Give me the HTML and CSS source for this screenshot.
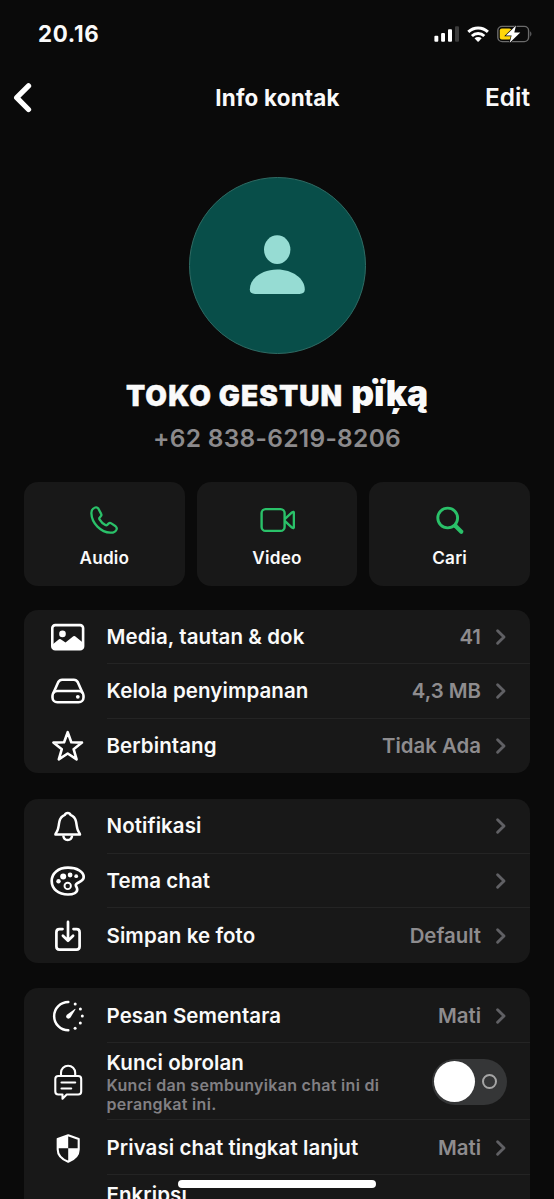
FILE: index.html
```html
<!DOCTYPE html>
<html lang="id">
<head>
<meta charset="utf-8">
<title>Info kontak</title>
<link rel="stylesheet" href="styles.css">
</head>
<body>
<svg class="defs" aria-hidden="true">
  <symbol id="chevron" viewBox="0 0 12 18"><path d="M2.6 2.7 9 9l-6.400 6.300" fill="none" stroke="currentColor" stroke-width="2.9" stroke-linecap="round" stroke-linejoin="round"/></symbol>
</svg>
<div class="screen">
  <header class="status">
    <span class="time">20.16</span>
    <svg class="status-icons" viewBox="0 0 100 20" aria-hidden="true">
      <g fill="#fff"><rect x=".4" y="11.800" width="3.900" height="6" rx="1"/><rect x="7.100" y="9" width="3.900" height="8.800" rx="1"/><rect x="14" y="5.200" width="4" height="12.600" rx="1"/></g>
      <rect x="21" y="2.300" width="4" height="15.500" rx="1" fill="#3b3b3b"/>
      <g fill="none" stroke="#fff" stroke-width="3"><path d="M34.300 7.800a14.200 14.200 0 0 1 19.600 0"/><path d="M37.900 12a9 9 0 0 1 12.400 0"/></g>
      <path d="M40.500 14.300a5.300 5.300 0 0 1 7.200 0l-3 3.200q-.6.5-1.200 0z" fill="#fff"/>
      <rect x="63.800" y="2.400" width="30.800" height="15.200" rx="4.300" fill="none" stroke="#6b6b6b" stroke-width="1.400"/>
      <path d="M96.300 7.300q2.200 2.600 0 5.400z" fill="#77777a"/>
      <rect x="65.800" y="4.400" width="11.500" height="11.200" rx="2" fill="#ffd60a"/>
      <path d="M82 1.600 71.800 11.600h5.800L75.700 18.700 86.300 8.600h-6z" fill="#fff" stroke="#0a0a0a" stroke-width="1.300" paint-order="stroke"/>
    </svg>
  </header>

  <nav class="nav">
    <svg class="back" viewBox="0 0 20 32" aria-hidden="true"><path d="M16.500 3.900 4.700 15.700 16.500 27.500" fill="none" stroke="#fff" stroke-width="5.300" stroke-linecap="round" stroke-linejoin="round"/></svg>
    <h1 class="nav-title">Info kontak</h1>
    <span class="edit">Edit</span>
  </nav>

  <section class="profile">
    <div class="avatar">
      <svg viewBox="0 0 56 60" aria-hidden="true"><g fill="#96dcd3"><ellipse cx="28.200" cy="14.600" rx="13.200" ry="14.300"/><path d="M.8 54.500C.8 43.500 13 34.500 28.200 34.500S55.800 43.500 55.800 54.500Q55.800 58.900 50.500 58.900H6Q.8 58.900.8 54.500z"/></g></svg>
    </div>
    <h2 class="name"><span class="name-main">TOKO GESTUN</span><span class="name-alt">pïķą</span></h2>
    <p class="phone">+62 838-6219-8206</p>
  </section>

  <section class="actions">
    <div class="action">
      <svg viewBox="0 0 36 30" aria-hidden="true"><path transform="translate(4 1)" d="M5.200 1.500C3 2.200 1.300 4.300 1.400 7.400c.3 9.900 9.500 18.900 19 19.300 3 .1 5.400-1.300 6.200-3.400.4-1.200 0-2.200-1-3l-4.300-2.900c-1-.7-2-.6-2.800.2l-1.300 1.300c-.5.500-1.100.6-1.800.2-2.600-1.500-4.400-3.300-5.900-5.800-.4-.7-.3-1.300.2-1.800l1.100-1.200c.8-.8.8-1.700.2-2.700L8.300 2.500C7.500 1.400 6.400 1.100 5.200 1.500z" fill="none" stroke="#2ac169" stroke-width="2.300" stroke-linejoin="round"/></svg>
      <span>Audio</span>
    </div>
    <div class="action">
      <svg viewBox="0 0 36 30" aria-hidden="true"><g transform="translate(.7 0)" fill="none" stroke="#2ac169" stroke-width="2.400" stroke-linejoin="round"><rect x="1.900" y="4.100" width="23" height="21.800" rx="4"/><path d="M25 14.200 32.300 7.400q1.900-1.300 1.900.8V21.800q0 2.100-1.900.8L25 15.800"/></g></svg>
      <span>Video</span>
    </div>
    <div class="action">
      <svg viewBox="0 0 36 30" aria-hidden="true"><g fill="none" stroke="#2ac169"><circle cx="15.700" cy="13" r="9.900" stroke-width="2.900"/><path d="m23.300 20.700 6 6" stroke-width="4.200" stroke-linecap="round"/></g></svg>
      <span>Cari</span>
    </div>
  </section>

  <section class="card">
    <div class="row">
      <svg class="icon" viewBox="0 0 40 40" aria-hidden="true"><rect x="4.300" y="8.100" width="30.800" height="24.200" rx="3" fill="none" stroke="#fff" stroke-width="2.600"/><circle cx="14.500" cy="16.900" r="3.300" fill="#fff"/><path d="M4.500 27.500 11 22.300q.8-.6 1.700 0l4.800 3.300 7.800-6.300q.9-.7 1.800 0l8 6.400V32H4.500z" fill="#fff"/></svg>
      <div class="body"><span class="label">Media, tautan &amp; dok</span><span class="value">41</span><svg class="chev"><use href="#chevron"/></svg></div>
    </div>
    <div class="row">
      <svg class="icon" viewBox="0 0 40 40" aria-hidden="true"><g fill="none" stroke="#fff" stroke-width="2.600" stroke-linejoin="round"><path d="M5.300 22.300 10.300 11Q11.600 8.700 14.100 8.700H25.900Q28.400 8.700 29.700 11L34.700 22.300"/><rect x="4.500" y="20" width="31" height="11.200" rx="4.800"/></g><circle cx="29.800" cy="25.800" r="1.900" fill="#fff"/></svg>
      <div class="body"><span class="label">Kelola penyimpanan</span><span class="value">4,3 MB</span><svg class="chev"><use href="#chevron"/></svg></div>
    </div>
    <div class="row">
      <svg class="icon" viewBox="0 0 40 40" aria-hidden="true"><path d="M19.700 6.200 23.300 16.300 34 16.600 25.600 23.200 28.600 33.400 19.700 27.500 10.800 33.400 13.800 23.200 5.400 16.600 16.100 16.300z" fill="none" stroke="#fff" stroke-width="2.600" stroke-linejoin="round"/></svg>
      <div class="body"><span class="label">Berbintang</span><span class="value">Tidak Ada</span><svg class="chev"><use href="#chevron"/></svg></div>
    </div>
  </section>

  <section class="card">
    <div class="row">
      <svg class="icon" viewBox="0 0 40 40" aria-hidden="true"><g fill="none" stroke="#fff" stroke-width="2.500" stroke-linejoin="round"><path d="M7.400 28.600Q7.400 27.500 8.300 26.500C10.700 24 10.300 20.500 11.400 15.500 12.200 11.700 14 9.900 16.900 8.800Q17.500 6.900 19.700 6.900T22.500 8.800C25.400 9.900 27.200 11.700 28 15.500 29.100 20.500 28.700 24 31.100 26.500Q32 27.500 32 28.600z"/><path d="M15.300 29.500c.3 3 2.100 4.500 4.400 4.500s4.100-1.500 4.400-4.500"/></g></svg>
      <div class="body"><span class="label">Notifikasi</span><svg class="chev"><use href="#chevron"/></svg></div>
    </div>
    <div class="row">
      <svg class="icon" viewBox="0 0 40 40" aria-hidden="true"><path d="M20 6.700C10.200 6.700 3.700 12.400 3.700 20 3.700 28 10.500 33.500 20 33.500c5.600 0 9.200-2 9.200-5 0-2-1.400-2.900-1.400-4.400 0-3.500 7.900-2.500 7.900-8.100C35.700 10.700 29 6.700 20 6.700z" fill="none" stroke="#fff" stroke-width="2.700"/><g fill="#fff"><circle cx="10.500" cy="20.200" r="2.200"/><circle cx="15.200" cy="15.600" r="3"/><circle cx="22.100" cy="14" r="2.400"/><circle cx="28.200" cy="15.200" r="1.900"/></g><circle cx="19.700" cy="24.900" r="3.200" fill="none" stroke="#fff" stroke-width="1.900"/></svg>
      <div class="body"><span class="label">Tema chat</span><svg class="chev"><use href="#chevron"/></svg></div>
    </div>
    <div class="row">
      <svg class="icon" viewBox="0 0 40 40" aria-hidden="true"><g fill="none" stroke="#fff" stroke-width="2.700" stroke-linecap="round" stroke-linejoin="round"><path d="M14.500 14.100H11.500Q8.400 14.100 8.400 17.200V31.600Q8.400 34.700 11.500 34.700H28.500Q31.600 34.700 31.600 31.600V17.200Q31.600 14.100 28.500 14.100H25.500"/><path d="M20 6.900V25.400M14.900 20.700 20 25.700 25.100 20.700"/></g></svg>
      <div class="body"><span class="label">Simpan ke foto</span><span class="value">Default</span><svg class="chev"><use href="#chevron"/></svg></div>
    </div>
  </section>

  <section class="card">
    <div class="row">
      <svg class="icon" viewBox="0 0 40 40" aria-hidden="true"><path d="M20.300 6A14.150 14.150 0 0 0 20.300 34.300" fill="none" stroke="#fff" stroke-width="2.500" stroke-linecap="round"/><g fill="#fff"><circle cx="27.200" cy="8" r="1.500"/><circle cx="32.400" cy="13" r="1.500"/><circle cx="34.300" cy="20.100" r="1.500"/><circle cx="32.300" cy="27.100" r="1.500"/><circle cx="27.100" cy="32.200" r="1.500"/><path d="M26.800 13q.9-.5.600.6L22.500 21.500q-1.500 1.900-3.400.7-1.900-1.600-.2-3.500z"/></g></svg>
      <div class="body"><span class="label">Pesan Sementara</span><span class="value">Mati</span><svg class="chev"><use href="#chevron"/></svg></div>
    </div>
    <div class="row row-lock">
      <svg class="icon" viewBox="0 0 40 40" aria-hidden="true"><g fill="none" stroke="#fff" stroke-width="2.100" stroke-linejoin="round" stroke-linecap="round"><path d="M13 14V10.800a7.100 7.100 0 0 1 14.200 0V14"/><path d="M10.300 14H30.200Q33.200 14 33.200 17V29.500Q33.200 32.500 30.200 32.500H18.700L14.500 36.700V32.500H10.300Q7.300 32.500 7.300 29.500V17Q7.300 14 10.300 14z"/><path d="M13.500 20.500H27.200M13.500 26.500H23.200"/></g></svg>
      <div class="body"><div class="stack"><span class="label">Kunci obrolan</span><span class="note">Kunci dan sembunyikan chat ini di perangkat ini.</span></div><span class="toggle"><i class="knob"></i><i class="ring"></i></span></div>
    </div>
    <div class="row">
      <svg class="icon" viewBox="0 0 40 40" aria-hidden="true"><path d="M20.200 7.200 30.700 11V21.500C30.700 27.500 26 31.500 20.200 33.800 14.400 31.500 9.700 27.500 9.700 21.500V11z" fill="none" stroke="#fff" stroke-width="2.100" stroke-linejoin="round"/><path d="M20.200 7.200V20.200H9.700V11zM20.200 20.200H30.700V21.500C30.700 27.500 26 31.500 20.200 33.800z" fill="#fff"/></svg>
      <div class="body"><span class="label">Privasi chat tingkat lanjut</span><span class="value">Mati</span><svg class="chev"><use href="#chevron"/></svg></div>
    </div>
    <div class="row row-enc">
      <div class="icon"></div>
      <div class="body"><span class="label">Enkripsi</span></div>
    </div>
  </section>
  <div class="home-bar"></div>
</div>
</body>
</html>
```

FILE: styles.css
```css
* { box-sizing: border-box; margin: 0; padding: 0; }
body {
  background: #0a0a0a;
  color: #fafafa;
  font-family: Inter, "Liberation Sans", sans-serif;
}
.defs { display: none; }
.screen {
  position: relative;
  width: 554px;
  height: 1199px;
  overflow: hidden;
}
.status {
  display: flex;
  justify-content: space-between;
  align-items: center;
  height: 68px;
  padding: 0 20px 0 38px;
}
.time { font-size: 22.300px; font-weight: 700; letter-spacing: .7px; line-height: 26px; margin-bottom: 1px; }
.status-icons { width: 100px; height: 20px; }
.nav {
  display: grid;
  grid-template-columns: 100px 1fr 100px;
  align-items: center;
  height: 59px;
  padding: 0 24px 0 12px;
}
.back { width: 20px; height: 32px; }
.nav-title { font-size: 22.400px; font-weight: 750; letter-spacing: .2px; text-align: center; padding-left: 13px; }
.edit { font-size: 24.400px; font-weight: 600; text-align: right; line-height: 30px; margin-bottom: 1px; }
.profile {
  display: flex;
  flex-direction: column;
  align-items: center;
  height: 355px;
  padding-top: 50px;
}
.avatar {
  display: flex;
  justify-content: center;
  width: 177px;
  height: 177px;
  padding-top: 56.500px;
  border: 1.500px solid #2f6b64;
  border-radius: 50%;
  background: #084e49;
}
.avatar svg { width: 56px; height: 60px; }
.name {
  display: flex;
  align-items: baseline;
  gap: 8px;
  height: 44px;
  margin-top: 18px;
  line-height: 44px;
}
.name-main { font-size: 28px; font-weight: 900; letter-spacing: 1.100px; -webkit-text-stroke: .4px #fafafa; }
.name-alt { font-size: 35.500px; font-weight: 900; letter-spacing: -.2px; }
.phone {
  margin-top: 7px;
  color: #8c8a8c;
  font-size: 24.500px;
  font-weight: 600;
  letter-spacing: .3px;
  line-height: 30px;
}
.actions {
  display: grid;
  grid-template-columns: repeat(3, 1fr);
  gap: 12px;
  height: 103.500px;
  margin: 0 24px;
}
.action {
  display: flex;
  flex-direction: column;
  align-items: center;
  padding-top: 23px;
  border-radius: 14px;
  background: #181818;
  font-size: 17.200px;
  font-weight: 600;
  letter-spacing: .2px;
  line-height: 22px;
}
.action svg { width: 36px; height: 30px; margin-bottom: 12px; }
.card {
  margin: 25.900px 24px 0;
  border-radius: 14px;
  background: #181818;
}
.actions + .card { margin-top: 24.200px; }
.row { display: flex; align-items: center; height: 54.500px; padding-left: 24px; }
.icon { flex: none; width: 40px; height: 40px; margin-right: 18.500px; }
.body {
  display: flex;
  flex: 1;
  align-items: center;
  height: 100%;
  padding-top: 1px;
  padding-right: 23px;
  border-bottom: 1px solid #242424;
}
.row:last-child .body { border-bottom: 0; }
.label { font-size: 20.500px; font-weight: 600; letter-spacing: .08px; line-height: 26px; }
.value { margin-left: auto; color: #8e8c8e; font-size: 20.400px; font-weight: 600; line-height: 26px; }
.chev { width: 12px; height: 18px; margin-left: 14px; color: #606064; }
.label + .chev { margin-left: auto; }
.row-lock { height: 77.500px; }
.stack { display: flex; flex-direction: column; width: 290px; }
.note { color: #828084; font-size: 16px; font-weight: 600; letter-spacing: .3px; line-height: 19px; }
.toggle {
  display: flex;
  align-items: center;
  width: 75px;
  height: 46px;
  margin-left: auto;
  padding: 0 10.500px 0 2px;
  justify-content: space-between;
  border-radius: 23px;
  background: #353637;
}
.knob { width: 41px; height: 41px; border-radius: 50%; background: #fff; }
.ring { width: 15px; height: 15px; border: 2px solid #a5a5a5; border-radius: 50%; }
.row-enc .body { align-items: flex-start; padding-top: 7px; }
.home-bar {
  position: absolute;
  left: 178px;
  top: 1179.500px;
  width: 198px;
  height: 8px;
  border-radius: 4px;
  background: #fff;
}
```
